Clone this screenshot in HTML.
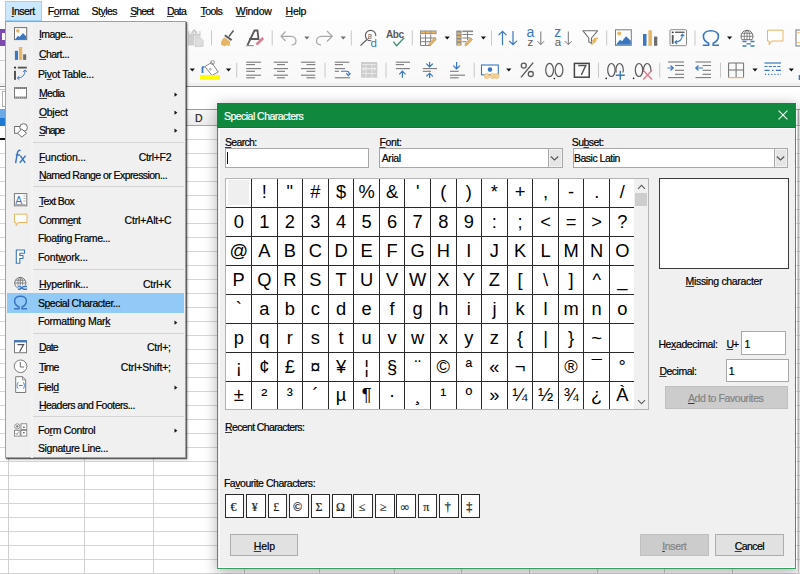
<!DOCTYPE html><html><head><meta charset="utf-8"><style>
html,body{margin:0;padding:0;}
body{width:800px;height:574px;overflow:hidden;position:relative;background:#fff;font-family:"Liberation Sans",sans-serif;}
.t{position:absolute;white-space:pre;line-height:1;-webkit-text-stroke:0.2px currentColor;}
.r{position:absolute;box-sizing:border-box;}
u{text-decoration:underline;text-underline-offset:1px;text-decoration-thickness:1px;text-decoration-color:#3a3a3a;}
</style></head><body>
<div class="r" style="left:0.00px;top:21.00px;width:800.00px;height:62.00px;background:linear-gradient(#fdfdfd,#f8f8f8)"></div>
<div class="r" style="left:0.00px;top:82.50px;width:800.00px;height:3.50px;background:#f0f0f0"></div>
<div class="r" style="left:0.00px;top:86.00px;width:800.00px;height:1.00px;background:#8c8c8c"></div>
<div class="r" style="left:0.00px;top:87.00px;width:800.00px;height:22.50px;background:#fff"></div>
<div class="r" style="left:0.00px;top:109.00px;width:800.00px;height:17.00px;background:linear-gradient(#f6f6f6,#ececec);border-top:1px solid #9a9a9a;border-bottom:1px solid #a8a8a8"></div>
<div class="r" style="left:0.00px;top:139.30px;width:800.00px;height:1.00px;background:#d6d6d6"></div>
<div class="r" style="left:0.00px;top:153.30px;width:800.00px;height:1.00px;background:#d6d6d6"></div>
<div class="r" style="left:0.00px;top:167.30px;width:800.00px;height:1.00px;background:#d6d6d6"></div>
<div class="r" style="left:0.00px;top:181.30px;width:800.00px;height:1.00px;background:#d6d6d6"></div>
<div class="r" style="left:0.00px;top:195.30px;width:800.00px;height:1.00px;background:#d6d6d6"></div>
<div class="r" style="left:0.00px;top:209.30px;width:800.00px;height:1.00px;background:#d6d6d6"></div>
<div class="r" style="left:0.00px;top:223.30px;width:800.00px;height:1.00px;background:#d6d6d6"></div>
<div class="r" style="left:0.00px;top:237.30px;width:800.00px;height:1.00px;background:#d6d6d6"></div>
<div class="r" style="left:0.00px;top:251.30px;width:800.00px;height:1.00px;background:#d6d6d6"></div>
<div class="r" style="left:0.00px;top:265.30px;width:800.00px;height:1.00px;background:#d6d6d6"></div>
<div class="r" style="left:0.00px;top:279.30px;width:800.00px;height:1.00px;background:#d6d6d6"></div>
<div class="r" style="left:0.00px;top:293.30px;width:800.00px;height:1.00px;background:#d6d6d6"></div>
<div class="r" style="left:0.00px;top:307.30px;width:800.00px;height:1.00px;background:#d6d6d6"></div>
<div class="r" style="left:0.00px;top:321.30px;width:800.00px;height:1.00px;background:#d6d6d6"></div>
<div class="r" style="left:0.00px;top:335.30px;width:800.00px;height:1.00px;background:#d6d6d6"></div>
<div class="r" style="left:0.00px;top:349.30px;width:800.00px;height:1.00px;background:#d6d6d6"></div>
<div class="r" style="left:0.00px;top:363.30px;width:800.00px;height:1.00px;background:#d6d6d6"></div>
<div class="r" style="left:0.00px;top:377.30px;width:800.00px;height:1.00px;background:#d6d6d6"></div>
<div class="r" style="left:0.00px;top:391.30px;width:800.00px;height:1.00px;background:#d6d6d6"></div>
<div class="r" style="left:0.00px;top:405.30px;width:800.00px;height:1.00px;background:#d6d6d6"></div>
<div class="r" style="left:0.00px;top:419.30px;width:800.00px;height:1.00px;background:#d6d6d6"></div>
<div class="r" style="left:0.00px;top:433.30px;width:800.00px;height:1.00px;background:#d6d6d6"></div>
<div class="r" style="left:0.00px;top:447.30px;width:800.00px;height:1.00px;background:#d6d6d6"></div>
<div class="r" style="left:0.00px;top:461.30px;width:800.00px;height:1.00px;background:#d6d6d6"></div>
<div class="r" style="left:0.00px;top:475.30px;width:800.00px;height:1.00px;background:#d6d6d6"></div>
<div class="r" style="left:0.00px;top:489.30px;width:800.00px;height:1.00px;background:#d6d6d6"></div>
<div class="r" style="left:0.00px;top:503.30px;width:800.00px;height:1.00px;background:#d6d6d6"></div>
<div class="r" style="left:0.00px;top:517.30px;width:800.00px;height:1.00px;background:#d6d6d6"></div>
<div class="r" style="left:0.00px;top:531.30px;width:800.00px;height:1.00px;background:#d6d6d6"></div>
<div class="r" style="left:0.00px;top:545.30px;width:800.00px;height:1.00px;background:#d6d6d6"></div>
<div class="r" style="left:0.00px;top:559.30px;width:800.00px;height:1.00px;background:#d6d6d6"></div>
<div class="r" style="left:0.00px;top:573.30px;width:800.00px;height:1.00px;background:#d6d6d6"></div>
<div class="r" style="left:8.20px;top:125.50px;width:1.00px;height:450.00px;background:#d0d0d0"></div>
<div class="r" style="left:8.20px;top:110.00px;width:1.00px;height:15.50px;background:#b8b8b8"></div>
<div class="r" style="left:84.20px;top:125.50px;width:1.00px;height:450.00px;background:#d0d0d0"></div>
<div class="r" style="left:84.20px;top:110.00px;width:1.00px;height:15.50px;background:#b8b8b8"></div>
<div class="r" style="left:152.60px;top:125.50px;width:1.00px;height:450.00px;background:#d0d0d0"></div>
<div class="r" style="left:152.60px;top:110.00px;width:1.00px;height:15.50px;background:#b8b8b8"></div>
<div class="r" style="left:244.20px;top:125.50px;width:1.00px;height:450.00px;background:#d0d0d0"></div>
<div class="r" style="left:244.20px;top:110.00px;width:1.00px;height:15.50px;background:#b8b8b8"></div>
<div class="r" style="left:319.10px;top:125.50px;width:1.00px;height:450.00px;background:#d0d0d0"></div>
<div class="r" style="left:319.10px;top:110.00px;width:1.00px;height:15.50px;background:#b8b8b8"></div>
<div class="r" style="left:394.00px;top:125.50px;width:1.00px;height:450.00px;background:#d0d0d0"></div>
<div class="r" style="left:394.00px;top:110.00px;width:1.00px;height:15.50px;background:#b8b8b8"></div>
<div class="r" style="left:461.40px;top:125.50px;width:1.00px;height:450.00px;background:#d0d0d0"></div>
<div class="r" style="left:461.40px;top:110.00px;width:1.00px;height:15.50px;background:#b8b8b8"></div>
<div class="r" style="left:529.20px;top:125.50px;width:1.00px;height:450.00px;background:#d0d0d0"></div>
<div class="r" style="left:529.20px;top:110.00px;width:1.00px;height:15.50px;background:#b8b8b8"></div>
<div class="r" style="left:596.60px;top:125.50px;width:1.00px;height:450.00px;background:#d0d0d0"></div>
<div class="r" style="left:596.60px;top:110.00px;width:1.00px;height:15.50px;background:#b8b8b8"></div>
<div class="r" style="left:664.00px;top:125.50px;width:1.00px;height:450.00px;background:#d0d0d0"></div>
<div class="r" style="left:664.00px;top:110.00px;width:1.00px;height:15.50px;background:#b8b8b8"></div>
<div class="r" style="left:731.50px;top:125.50px;width:1.00px;height:450.00px;background:#d0d0d0"></div>
<div class="r" style="left:731.50px;top:110.00px;width:1.00px;height:15.50px;background:#b8b8b8"></div>
<div class="r" style="left:797.50px;top:125.50px;width:1.00px;height:450.00px;background:#d0d0d0"></div>
<div class="r" style="left:797.50px;top:110.00px;width:1.00px;height:15.50px;background:#b8b8b8"></div>
<div class="t" style="left:195.00px;top:112.61px;font-size:10.5px;color:#222;letter-spacing:1.000px;">D</div>
<div class="r" style="left:0.00px;top:109.50px;width:5.00px;height:8.00px;background:#6aa9e6"></div>
<div class="r" style="left:0.00px;top:117.50px;width:5.00px;height:8.50px;background:#1f78d1"></div>
<div class="r" style="left:0.00px;top:138.30px;width:5.00px;height:1.60px;background:#111"></div>
<div class="r" style="left:0.00px;top:29.00px;width:5.00px;height:17.00px;background:#7d4bb0"></div>
<div class="r" style="left:1.50px;top:33.00px;width:3.50px;height:6.50px;background:#fff"></div>
<div class="r" style="left:0.00px;top:60.30px;width:5.00px;height:1.00px;background:#cfcfcf"></div>
<div class="r" style="left:0.00px;top:88.50px;width:5.00px;height:1.00px;background:#c8c8c8"></div>
<div class="r" style="left:1.80px;top:90.50px;width:3.20px;height:16.00px;border:1px solid #b0b0b0;border-right:none;background:#fff"></div>
<div class="r" style="left:5.00px;top:1.00px;width:37.00px;height:20.00px;background:#cce8ff;border:1px solid #99d1ff"></div>
<div class="t" style="left:11.50px;top:5.61px;font-size:10.5px;color:#000;letter-spacing:-0.500px;"><u>I</u>nsert</div>
<div class="t" style="left:47.75px;top:5.61px;font-size:10.5px;color:#000;letter-spacing:-0.370px;">F<u>o</u>rmat</div>
<div class="t" style="left:91.50px;top:5.61px;font-size:10.5px;color:#000;letter-spacing:-0.500px;">St<u>y</u>les</div>
<div class="t" style="left:130.20px;top:5.61px;font-size:10.5px;color:#000;letter-spacing:-0.850px;"><u>S</u>heet</div>
<div class="t" style="left:167.00px;top:5.61px;font-size:10.5px;color:#000;letter-spacing:-0.800px;"><u>D</u>ata</div>
<div class="t" style="left:200.60px;top:5.61px;font-size:10.5px;color:#000;letter-spacing:-0.600px;"><u>T</u>ools</div>
<div class="t" style="left:235.70px;top:5.61px;font-size:10.5px;color:#000;letter-spacing:-0.220px;"><u>W</u>indow</div>
<div class="t" style="left:285.60px;top:5.61px;font-size:10.5px;color:#000;letter-spacing:-0.300px;"><u>H</u>elp</div>
<svg class="r" style="left:0;top:0" width="800" height="90" viewBox="0 0 800 90"><rect x="188" y="31.3" width="12.6" height="14.2" fill="#cfcfcf"/><rect x="189.3" y="31.2" width="10" height="2.6" fill="#fbfbfb"/><path d="M190.6 33.4 L193.4 29.6 h1.6 L197.8 33.4 Z" fill="#c6c6c6"/><circle cx="194.2" cy="32.2" r="0.8" fill="#fbfbfb"/><path d="M194.2 36.4 h6.2 l3.8 3.8 v7.2 h-10 Z" fill="#fbfbfb"/><path d="M195.2 37.4 h4.8 l3 3 v6 h-7.8 Z" fill="#dedede" stroke="#c6c6c6" stroke-width="0.8"/><rect x="211.0" y="30.5" width="1" height="15.0" fill="#c8c8c8"/><path d="M233.5 30.5 L229 36.5" stroke="#5a5a5a" stroke-width="1.4"/><path d="M224.8 35.3 L231.6 40.1" stroke="#5a5a5a" stroke-width="2"/><path d="M224.3 37.2 L230.2 41.4 L229.6 46 L226.5 45.2 L224.2 46.2 L221 44.6 C220.5 42 222 39 224.3 37.2 Z" fill="#e8b564"/><path d="M247.5 45 L254.5 30.5 L257.5 30.5 L258.5 39 L249 39" stroke="#5a5a5a" stroke-width="1.8" fill="none"/><path d="M246.2 45.7 h7.5" stroke="#5a5a5a" stroke-width="0.8"/><path d="M256.4 44.6 L263.2 38" stroke="#e27a8f" stroke-width="2.6"/><rect x="271.7" y="30.5" width="1" height="15.0" fill="#c8c8c8"/><path d="M285.5 31.5 L281 36.3 L285.5 41" stroke="#a8a8a8" stroke-width="1.2" fill="none"/><path d="M281 36.3 H291 C294 36.3 296 38.5 296 41 C296 43.5 294 45 291.5 45" stroke="#a8a8a8" stroke-width="1.2" fill="none"/><path d="M304.25 36.4 L309.45000000000005 36.4 L306.85 39.4 Z" fill="#6e6e6e"/><path d="M327 31 L332.3 36.3 L327 41.5" stroke="#a8a8a8" stroke-width="1.2" fill="none"/><path d="M332.3 36.3 H321.5 C318.5 36.3 316.5 38.5 316.5 41 C316.5 43.5 318.5 44.8 321 44.8" stroke="#a8a8a8" stroke-width="1.2" fill="none"/><path d="M340.65 36.4 L345.85 36.4 L343.25 39.4 Z" fill="#6e6e6e"/><rect x="350.8" y="30.5" width="1" height="15.0" fill="#c8c8c8"/><circle cx="370.6" cy="35.6" r="5.2" stroke="#5a5a5a" stroke-width="1.1" fill="none"/><path d="M366.8 39.6 L360.5 45.6" stroke="#5a5a5a" stroke-width="1.3"/><text x="367.4" y="39" font-family="Liberation Sans" font-size="8.5" fill="#5a5a5a">a</text><rect x="371.5" y="36" width="7" height="10" fill="#fff"/><text x="370.6" y="46.8" font-family="Liberation Sans" font-size="11.5" fill="#3a77c0">d</text><text x="386" y="37.8" font-family="Liberation Sans" font-weight="bold" font-size="10" fill="#5a5a5a" letter-spacing="-0.4">Abc</text><path d="M393.4 41.6 L396.6 45.8 L404.2 37.8" stroke="#3b8f6e" stroke-width="1.3" fill="none"/><rect x="411.8" y="30.5" width="1" height="15.0" fill="#c8c8c8"/><rect x="420" y="30.5" width="16.5" height="3.6" fill="#8a8a8a"/><rect x="420.8" y="31.3" width="4.4" height="2" fill="#e8b564"/><rect x="426" y="31.3" width="4.4" height="2" fill="#e8b564"/><rect x="431.2" y="31.3" width="4.4" height="2" fill="#e8b564"/><path d="M420.5 34.5 V45.5 H431 M420.5 38 H436 M420.5 41.7 H431 M425.5 34.5 V45.5 M430.7 34.5 V41" stroke="#777" stroke-width="0.9" fill="none"/><path d="M429 45.8 L428.6 44 L434.5 37.8 L436.3 39.6 L430.4 45.6 Z" fill="#e8b564" stroke="#9a8460" stroke-width="0.5"/><path d="M444.59999999999997 36.4 L449.8 36.4 L447.2 39.4 Z" fill="#111"/><rect x="456.3" y="30.5" width="5.2" height="15" fill="#8a8a8a"/><rect x="457.2" y="32.5" width="3.4" height="2" fill="#e8b564"/><rect x="457.2" y="36" width="3.4" height="2" fill="#e8b564"/><rect x="457.2" y="39.5" width="3.4" height="2" fill="#e8b564"/><rect x="457.2" y="43" width="3.4" height="2" fill="#e8b564"/><rect x="462.3" y="30.5" width="10.8" height="1.6" fill="#8a8a8a"/><path d="M462.3 34.5 H473.1 M462.3 38 H470.3 M462.3 41.7 H466.3 M467.5 32 V40" stroke="#777" stroke-width="0.9" fill="none"/><path d="M465.3 45.8 L464.90000000000003 44 L470.8 37.8 L472.6 39.6 L466.7 45.6 Z" fill="#e8b564" stroke="#9a8460" stroke-width="0.5"/><path d="M480.79999999999995 36.4 L486.0 36.4 L483.4 39.4 Z" fill="#111"/><rect x="491.0" y="30.5" width="1" height="15.0" fill="#c8c8c8"/><path d="M502.5 45 V31.5 M498.6 35.2 L502.5 31.3 L506.4 35.2" stroke="#3a77c0" stroke-width="1.2" fill="none"/><path d="M513 31 V44.5 M509.1 40.8 L513 44.7 L516.9 40.8" stroke="#3a77c0" stroke-width="1.2" fill="none"/><text x="526.4" y="37.4" font-family="Liberation Sans" font-size="14" fill="#3a77c0" transform="translate(526.4 37.4) scale(1 1.05) translate(-526.4 -37.4)">a</text><text x="527.6" y="45.8" font-family="Liberation Sans" font-size="11.5" fill="#5a5a5a">z</text><path d="M540.8 31.5 V44.5 M537.5 41.2 L540.8 44.6 L544.1 41.2" stroke="#777" stroke-width="1" fill="none"/><text x="554.2" y="37.4" font-family="Liberation Sans" font-size="14" fill="#3a77c0">z</text><text x="554.8" y="45.8" font-family="Liberation Sans" font-size="11.5" fill="#5a5a5a">a</text><path d="M568.3 31.5 V44.5 M565 41.2 L568.3 44.6 L571.6 41.2" stroke="#777" stroke-width="1" fill="none"/><path d="M583 30.8 H597.5 L591.5 38 V43.2 L588.8 42 V38 Z" stroke="#707070" stroke-width="1.1" fill="#fff" stroke-linejoin="round"/><path d="M594.5 37.8 L598.6 37.8 L595.5 40.6 L597.2 40.6 L590.6 46.3 L593 41.8 L591.2 41.8 Z" fill="#e8b564"/><rect x="606.2" y="30.5" width="1" height="15.0" fill="#c8c8c8"/><rect x="615.5" y="29.8" width="15.8" height="15.5" fill="#fff" stroke="#7a7a7a" stroke-width="1"/><circle cx="619.2" cy="33.5" r="2.0" fill="#e8b564"/><path d="M616 44.8 L620.0 39.8 L622.0 41.3 L626.0 36.3 L630.8 40.8 V44.8 Z" fill="#3a77c0"/><rect x="643" y="34" width="3.5" height="11.8" fill="#3a77c0"/><rect x="648.4" y="30.3" width="3.5" height="15.5" fill="#e8b564"/><rect x="654" y="36.6" width="3.3" height="9.2" fill="#6e6e6e"/><rect x="670" y="29.7" width="16.5" height="16" rx="1" fill="#fff" stroke="#8a8a8a" stroke-width="1"/><rect x="671.8" y="31.6" width="1.8" height="1.6" fill="#333"/><rect x="675" y="31.6" width="9.5" height="1.3" fill="#555"/><rect x="671.8" y="35" width="1.8" height="8.8" fill="#555"/><path d="M675.5 42.2 C679 42.2 682.5 39.5 682.5 34.8 M680.7 36.2 L682.5 34.2 L684.3 36.2 M677 40.4 L675 42.2 L677 44" stroke="#3a77c0" stroke-width="1.1" fill="none"/><rect x="694.5" y="30.5" width="1" height="15.0" fill="#c8c8c8"/><path d="M702.8 45.2 H708.6 V43.3 C705.2 41.6 703.4 38.9 703.4 36.2 C703.4 32.9 706.6 30.7 710.9 30.7 C715.2 30.7 718.4 32.9 718.4 36.2 C718.4 38.9 716.6 41.6 713.2 43.3 V45.2 H719" stroke="#3a77c0" stroke-width="1.6" fill="none"/><path d="M727.0 36.4 L732.2 36.4 L729.6 39.4 Z" fill="#111"/><circle cx="747" cy="36.3" r="6" stroke="#6e6e6e" stroke-width="1" fill="none"/><path d="M741 36.3 H753 M742 33.3 H752 M742 39.5 H752 M747 30.3 V42.3" stroke="#6e6e6e" stroke-width="0.8" fill="none"/><ellipse cx="747" cy="36.3" rx="2.8" ry="6" stroke="#6e6e6e" stroke-width="0.8" fill="none"/><rect x="741.5" y="40.5" width="15" height="6.5" fill="#fff"/><path d="M742.5 41.5 h4 M750.5 41.5 h4 M746.5 43.8 h4.5 M742.5 46 h4 M750.5 46 h4" stroke="#3a77c0" stroke-width="1.3"/><path d="M767.5 30.2 H783 V41 H771.8 L769.2 44.8 V41 H767.5 Z" fill="#fff" stroke="#e8b564" stroke-width="1" stroke-linejoin="round"/><rect x="796" y="30" width="6" height="16" fill="#fff" stroke="#777" stroke-width="1"/><rect x="797.5" y="32" width="2" height="1.2" fill="#e8b564"/><rect x="797.5" y="42" width="2" height="1.2" fill="#e8b564"/><path d="M189.70000000000002 68.4 L194.9 68.4 L192.3 71.4 Z" fill="#111"/><path d="M202.5 67 V73" stroke="#3a77c0" stroke-width="1.8"/><path d="M202 67 h2.5" stroke="#3a77c0" stroke-width="1.5"/><path d="M205 66.5 L211.6 62.5 L218.2 72 L212 75.5 Z" fill="#fff" stroke="#777" stroke-width="0.9" stroke-linejoin="round"/><circle cx="212.5" cy="62.5" r="1.9" stroke="#777" stroke-width="0.8" fill="none"/><circle cx="210.4" cy="69.2" r="0.9" stroke="#777" stroke-width="0.6" fill="none"/><rect x="200" y="75" width="20" height="4.8" fill="#ffff00"/><path d="M225.9 68.4 L231.1 68.4 L228.5 71.4 Z" fill="#111"/><rect x="236.2" y="62.7" width="1" height="15.0" fill="#c8c8c8"/><path d="M246.2 62.2 H261" stroke="#7a7a7a" stroke-width="1.1"/><path d="M246.2 64.6 H255" stroke="#7a7a7a" stroke-width="1.1"/><path d="M246.2 68.6 H261" stroke="#7a7a7a" stroke-width="1.1"/><path d="M246.2 71.3 H255" stroke="#7a7a7a" stroke-width="1.1"/><path d="M246.2 75.2 H261" stroke="#7a7a7a" stroke-width="1.1"/><path d="M246.2 77.8 H255" stroke="#7a7a7a" stroke-width="1.1"/><path d="M273.7 62.2 H288" stroke="#7a7a7a" stroke-width="1.1"/><path d="M277 64.6 H285" stroke="#7a7a7a" stroke-width="1.1"/><path d="M273.7 68.6 H288" stroke="#7a7a7a" stroke-width="1.1"/><path d="M277 71.3 H285" stroke="#7a7a7a" stroke-width="1.1"/><path d="M273.7 75.2 H288" stroke="#7a7a7a" stroke-width="1.1"/><path d="M277 77.8 H285" stroke="#7a7a7a" stroke-width="1.1"/><path d="M301 62.2 H315.3" stroke="#7a7a7a" stroke-width="1.1"/><path d="M306.5 64.6 H315.3" stroke="#7a7a7a" stroke-width="1.1"/><path d="M301 68.6 H315.3" stroke="#7a7a7a" stroke-width="1.1"/><path d="M306.5 71.3 H315.3" stroke="#7a7a7a" stroke-width="1.1"/><path d="M301 75.2 H315.3" stroke="#7a7a7a" stroke-width="1.1"/><path d="M306.5 77.8 H315.3" stroke="#7a7a7a" stroke-width="1.1"/><rect x="324.5" y="62.7" width="1" height="15.0" fill="#c8c8c8"/><path d="M334.8 62.2 H349.3" stroke="#7a7a7a" stroke-width="1.1"/><path d="M334.8 64.6 H343" stroke="#7a7a7a" stroke-width="1.1"/><path d="M334.8 68.6 H345" stroke="#7a7a7a" stroke-width="1.1"/><path d="M334.8 71.3 H339" stroke="#7a7a7a" stroke-width="1.1"/><path d="M334.8 77.8 H350" stroke="#7a7a7a" stroke-width="1.1"/><path d="M341 71.3 H346.5 C348.5 71.3 349.5 72.5 349 74.6 M346.3 73.2 L348.3 75.6 L350.6 73.4" stroke="#3a77c0" stroke-width="1.1" fill="none"/><rect x="361" y="62" width="16.3" height="15.7" fill="#cdcdcd"/><path d="M362 64.5 H376.3 M362 73.5 H376.3 M366 65 V77 M372 65 V77" stroke="#e8e8e8" stroke-width="1"/><path d="M362.5 68.8 H375.8 M364.5 67.2 L362.5 68.8 L364.5 70.4 M373.8 67.2 L375.8 68.8 L373.8 70.4" stroke="#f4f4f4" stroke-width="1" fill="none"/><rect x="385.5" y="62.7" width="1" height="15.0" fill="#c8c8c8"/><path d="M395.8 62.2 H410" stroke="#7a7a7a" stroke-width="1.1"/><path d="M395.8 64.6 H404" stroke="#7a7a7a" stroke-width="1.1"/><path d="M395.8 68.6 H410" stroke="#7a7a7a" stroke-width="1.1"/><path d="M402.4 77.8 V71.5 M399.3 74.4 L402.4 71.2 L405.5 74.4" stroke="#3a77c0" stroke-width="1.2" fill="none"/><path d="M422.8 68.6 H437" stroke="#7a7a7a" stroke-width="1.1"/><path d="M422.8 71.3 H431" stroke="#7a7a7a" stroke-width="1.1"/><path d="M429.6 62 V66.5 M426.3 63.6 L429.6 66.8 L432.9 63.6 M429.6 78 V73.6 M426.3 76.4 L429.6 73.3 L432.9 76.4" stroke="#3a77c0" stroke-width="1.2" fill="none"/><path d="M450 71.3 H458.7" stroke="#7a7a7a" stroke-width="1.1"/><path d="M450 75.2 H465" stroke="#7a7a7a" stroke-width="1.1"/><path d="M450 77.8 H458.7" stroke="#7a7a7a" stroke-width="1.1"/><path d="M456.6 62 V68.5 M453.3 65.6 L456.6 68.8 L459.9 65.6" stroke="#3a77c0" stroke-width="1.2" fill="none"/><rect x="473.7" y="62.7" width="1" height="15.0" fill="#c8c8c8"/><rect x="481.5" y="65" width="16.8" height="9.8" fill="#fff" stroke="#3a77c0" stroke-width="1.1"/><circle cx="490" cy="69.6" r="2.3" fill="#3a77c0"/><ellipse cx="486.8" cy="76" rx="2.5" ry="2.6" fill="#f2d49a" stroke="#e8b564" stroke-width="0.6"/><ellipse cx="492.7" cy="76" rx="2.5" ry="2.6" fill="#f2d49a" stroke="#e8b564" stroke-width="0.6"/><ellipse cx="496.6" cy="76" rx="2.5" ry="2.6" fill="#f2d49a" stroke="#e8b564" stroke-width="0.6"/><path d="M506.2 68.4 L511.40000000000003 68.4 L508.8 71.4 Z" fill="#111"/><circle cx="523.8" cy="65.6" r="2.5" stroke="#5a5a5a" stroke-width="1.3" fill="none"/><circle cx="530.8" cy="74" r="2.5" stroke="#5a5a5a" stroke-width="1.3" fill="none"/><path d="M533.2 62.6 L521 77.4" stroke="#5a5a5a" stroke-width="1.4"/><ellipse cx="549.6" cy="70" rx="3.9" ry="6.6" stroke="#5a5a5a" stroke-width="1.2" fill="none"/><ellipse cx="559" cy="70" rx="3.9" ry="6.6" stroke="#5a5a5a" stroke-width="1.2" fill="none"/><circle cx="554.4" cy="78.6" r="0.8" fill="#111"/><rect x="574.4" y="63.4" width="14.8" height="13.8" fill="#fff" stroke="#444" stroke-width="1.5"/><path d="M578.2 65.6 H585.8 L581.3 75" stroke="#555" stroke-width="1.5" fill="none"/><rect x="598.0" y="62.7" width="1" height="15.0" fill="#c8c8c8"/><circle cx="606.2" cy="78.4" r="0.8" fill="#111"/><ellipse cx="611.4" cy="70" rx="3.7" ry="6.5" stroke="#5a5a5a" stroke-width="1.2" fill="none"/><ellipse cx="619.6" cy="70" rx="3.7" ry="6.5" stroke="#5a5a5a" stroke-width="1.2" fill="none"/><rect x="615.5" y="72.5" width="9.5" height="4.5" fill="#fbfbfb"/><path d="M620.3 70.8 V79.8 M615.8 75.3 H624.8" stroke="#3a77c0" stroke-width="1.4"/><circle cx="633.6" cy="78.4" r="0.8" fill="#111"/><ellipse cx="639" cy="70" rx="3.7" ry="6.5" stroke="#5a5a5a" stroke-width="1.2" fill="none"/><ellipse cx="647.2" cy="70" rx="3.7" ry="6.5" stroke="#5a5a5a" stroke-width="1.2" fill="none"/><rect x="643" y="72" width="9.5" height="5" fill="#fbfbfb"/><path d="M643.2 70.2 L652 79.5 M652 70.2 L643.2 79.5" stroke="#e27a8f" stroke-width="1.4"/><rect x="659.2" y="62.7" width="1" height="15.0" fill="#c8c8c8"/><path d="M668 62 H684" stroke="#7a7a7a" stroke-width="1.1"/><path d="M675 65.5 H684" stroke="#7a7a7a" stroke-width="1.1"/><path d="M675 70.3 H684" stroke="#7a7a7a" stroke-width="1.1"/><path d="M675 74.3 H684" stroke="#7a7a7a" stroke-width="1.1"/><path d="M668 77.6 H684" stroke="#7a7a7a" stroke-width="1.1"/><path d="M667.5 68 H673 M670.5 65.5 L673.2 68 L670.5 70.5" stroke="#3a77c0" stroke-width="1.2" fill="none"/><path d="M695.5 62 H711" stroke="#7a7a7a" stroke-width="1.1"/><path d="M702.5 65.5 H711" stroke="#7a7a7a" stroke-width="1.1"/><path d="M702.5 70.3 H711" stroke="#7a7a7a" stroke-width="1.1"/><path d="M702.5 74.3 H711" stroke="#7a7a7a" stroke-width="1.1"/><path d="M695.5 77.6 H711" stroke="#7a7a7a" stroke-width="1.1"/><path d="M696 68 H703 M698.5 65.5 L695.8 68 L698.5 70.5" stroke="#3a77c0" stroke-width="1.2" fill="none"/><rect x="720.0" y="62.7" width="1" height="15.0" fill="#c8c8c8"/><path d="M728.6 77 V63 H743.6 V77 M728.6 70 H743.6 M736.1 63 V77" stroke="#6e6e6e" stroke-width="1" fill="none"/><path d="M728 77.6 H744" stroke="#e8b564" stroke-width="1.2"/><path d="M752.4 68.4 L757.6 68.4 L755 71.4 Z" fill="#111"/><path d="M764.5 63 H781" stroke="#3a77c0" stroke-width="1.2"/><path d="M764.5 66.5 H781" stroke="#3a77c0" stroke-width="1.2" stroke-dasharray="3 1.3"/><path d="M764.5 70.3 H769.5 M772 70.3 H773.5 M775.8 70.3 H781" stroke="#3a77c0" stroke-width="1.2"/><path d="M765 74.3 H781" stroke="#3a77c0" stroke-width="1.2" stroke-dasharray="1.2 1.9"/><path d="M788.6999999999999 68.4 L793.9 68.4 L791.3 71.4 Z" fill="#111"/><rect x="798.7" y="75" width="2" height="5" fill="#3a77c0"/></svg>
<div class="r" style="left:217.5px;top:103px;width:579px;height:466px;box-shadow:0 3px 13px 1px rgba(0,0,0,0.3);"></div>
<div class="r" style="left:5px;top:21px;width:180.6px;height:437.2px;background:#f0f0f0;border:1px solid #a0a0a0;box-shadow:1px 1px 1px rgba(0,0,0,0.55), 2px 2px 2px rgba(0,0,0,0.2);"></div>
<div class="r" style="left:30.50px;top:22.50px;width:2.50px;height:435.00px;background:#f3f3f3"></div>
<div class="r" style="left:7.00px;top:293.00px;width:177.00px;height:20.00px;background:#91c9f7"></div>
<div class="t" style="left:38.90px;top:29.11px;font-size:10.5px;color:#000;letter-spacing:-0.514px;"><u>I</u>mage...</div>
<div class="t" style="left:38.90px;top:48.81px;font-size:10.5px;color:#000;letter-spacing:-0.529px;"><u>C</u>hart...</div>
<div class="t" style="left:37.90px;top:68.61px;font-size:10.5px;color:#000;letter-spacing:-0.285px;">Pi<u>v</u>ot Table...</div>
<div class="t" style="left:38.90px;top:88.21px;font-size:10.5px;color:#000;letter-spacing:-0.650px;"><u>M</u>edia</div>
<svg class="r" style="left:173.8px;top:91.7px" width="5" height="6"><path d="M0.5 0.6 L3.4 2.7 L0.5 4.8 Z" fill="#111"/></svg>
<div class="t" style="left:38.90px;top:106.51px;font-size:10.5px;color:#000;letter-spacing:-0.280px;"><u>O</u>bject</div>
<svg class="r" style="left:173.8px;top:110.0px" width="5" height="6"><path d="M0.5 0.6 L3.4 2.7 L0.5 4.8 Z" fill="#111"/></svg>
<div class="t" style="left:38.90px;top:124.91px;font-size:10.5px;color:#000;letter-spacing:-1.025px;"><u>S</u>hape</div>
<svg class="r" style="left:173.8px;top:128.4px" width="5" height="6"><path d="M0.5 0.6 L3.4 2.7 L0.5 4.8 Z" fill="#111"/></svg>
<div class="t" style="left:38.90px;top:151.61px;font-size:10.5px;color:#000;letter-spacing:-0.200px;"><u>F</u>unction...</div>
<div class="t" style="left:138.75px;top:151.61px;font-size:10.5px;color:#000;letter-spacing:-0.333px;">Ctrl+F2</div>
<div class="t" style="left:38.90px;top:169.51px;font-size:10.5px;color:#000;letter-spacing:-0.552px;"><u>N</u>amed Range or Expression...</div>
<div class="t" style="left:38.90px;top:195.71px;font-size:10.5px;color:#000;letter-spacing:-0.643px;"><u>T</u>ext Box</div>
<div class="t" style="left:38.90px;top:215.11px;font-size:10.5px;color:#000;letter-spacing:-0.567px;">Comm<u>e</u>nt</div>
<div class="t" style="left:124.50px;top:215.11px;font-size:10.5px;color:#000;letter-spacing:-0.139px;">Ctrl+Alt+C</div>
<div class="t" style="left:37.90px;top:233.21px;font-size:10.5px;color:#000;letter-spacing:-0.425px;">Floa<u>t</u>ing Frame...</div>
<div class="t" style="left:37.90px;top:251.91px;font-size:10.5px;color:#000;letter-spacing:-0.180px;">Font<u>w</u>ork...</div>
<div class="t" style="left:38.90px;top:278.91px;font-size:10.5px;color:#000;letter-spacing:-0.282px;"><u>H</u>yperlink...</div>
<div class="t" style="left:143.00px;top:278.91px;font-size:10.5px;color:#000;letter-spacing:-0.250px;">Ctrl+K</div>
<div class="t" style="left:37.90px;top:298.21px;font-size:10.5px;color:#000;letter-spacing:-0.468px;">S<u>p</u>ecial Character...</div>
<div class="t" style="left:37.90px;top:316.01px;font-size:10.5px;color:#000;letter-spacing:-0.279px;">Formatting Mar<u>k</u></div>
<svg class="r" style="left:173.8px;top:319.5px" width="5" height="6"><path d="M0.5 0.6 L3.4 2.7 L0.5 4.8 Z" fill="#111"/></svg>
<div class="t" style="left:38.90px;top:341.81px;font-size:10.5px;color:#000;letter-spacing:-0.833px;"><u>D</u>ate</div>
<div class="t" style="left:147.00px;top:341.81px;font-size:10.5px;color:#000;letter-spacing:-0.300px;">Ctrl+;</div>
<div class="t" style="left:38.90px;top:361.81px;font-size:10.5px;color:#000;letter-spacing:-0.867px;"><u>T</u>ime</div>
<div class="t" style="left:120.75px;top:361.81px;font-size:10.5px;color:#000;letter-spacing:-0.205px;">Ctrl+Shift+;</div>
<div class="t" style="left:37.90px;top:381.71px;font-size:10.5px;color:#000;letter-spacing:-0.400px;">Fiel<u>d</u></div>
<svg class="r" style="left:173.8px;top:385.2px" width="5" height="6"><path d="M0.5 0.6 L3.4 2.7 L0.5 4.8 Z" fill="#111"/></svg>
<div class="t" style="left:38.90px;top:399.81px;font-size:10.5px;color:#000;letter-spacing:-0.519px;"><u>H</u>eaders and Footers...</div>
<div class="t" style="left:37.90px;top:424.51px;font-size:10.5px;color:#000;letter-spacing:-0.327px;">Fo<u>r</u>m Control</div>
<svg class="r" style="left:173.8px;top:428.0px" width="5" height="6"><path d="M0.5 0.6 L3.4 2.7 L0.5 4.8 Z" fill="#111"/></svg>
<div class="t" style="left:37.90px;top:443.01px;font-size:10.5px;color:#000;letter-spacing:-0.375px;">Signat<u>u</u>re Line...</div>
<div class="r" style="left:33.00px;top:142.20px;width:151.00px;height:1.00px;background:#d4d4d4"></div>
<div class="r" style="left:33.00px;top:186.10px;width:151.00px;height:1.00px;background:#d4d4d4"></div>
<div class="r" style="left:33.00px;top:268.80px;width:151.00px;height:1.00px;background:#d4d4d4"></div>
<div class="r" style="left:33.00px;top:332.60px;width:151.00px;height:1.00px;background:#d4d4d4"></div>
<div class="r" style="left:33.00px;top:415.70px;width:151.00px;height:1.00px;background:#d4d4d4"></div>
<svg class="r" style="left:0;top:0" width="40" height="460" viewBox="0 0 40 460"><rect x="14.5" y="27.6" width="12.2" height="12" fill="#fff" stroke="#707070" stroke-width="1"/><circle cx="17.8" cy="30.9" r="1.8" fill="#e8b564"/><path d="M15 39.6 L18 35.8 L19.5 37 L23 33 L26.2 36.5 V39.6 Z" fill="#3a77c0"/><rect x="14.9" y="50.8" width="3.1" height="9.1" fill="#3a77c0"/><rect x="18.9" y="47" width="3.3" height="12.9" fill="#e8b564"/><rect x="23.1" y="54.3" width="3.1" height="5.6" fill="#6e6e6e"/><rect x="14" y="66.7" width="2" height="1.8" fill="#333"/><rect x="17.8" y="66.7" width="9" height="1.8" fill="#555"/><rect x="14" y="70.8" width="2" height="9" fill="#555"/><path d="M17.6 78 C21.5 78 25 75.5 25 70.5 M23.2 72 L25 70 L26.8 72 M19.3 76.2 L17.3 78 L19.3 79.8" stroke="#3a77c0" stroke-width="1" fill="none"/><rect x="14" y="87" width="13" height="11.6" fill="#7a7a7a"/><rect x="15" y="89" width="11" height="7.6" fill="#fff"/><path d="M15 88 H26 M15 97.6 H26" stroke="#fff" stroke-width="0.5" stroke-dasharray="0.8 1.2"/><rect x="14.6" y="126.5" width="6.8" height="6.8" fill="#fff" stroke="#6e6e6e" stroke-width="1"/><circle cx="23.6" cy="127.5" r="3.8" fill="#fff" stroke="#6e6e6e" stroke-width="1"/><path d="M21.8 129 L26.5 133.2 L21.8 137 L17.5 133.2 Z" fill="#fff" stroke="#6e6e6e" stroke-width="1"/><path d="M20.6 150.6 C19.2 150 17.8 150.6 17.5 152.5 L15.6 163.2 M15.8 155 H20" stroke="#3a77c0" stroke-width="1.5" fill="none"/><path d="M20.3 155.6 L25.2 162.8 M25.6 155.6 L19.8 162.8" stroke="#3a77c0" stroke-width="1.5" fill="none"/><rect x="14.4" y="193.6" width="12.4" height="12.2" fill="#fff" stroke="#7a7a7a" stroke-width="1"/><text x="15.2" y="203.6" font-family="Liberation Sans" font-size="10.5" fill="#3a77c0">A</text><path d="M23.5 196 H25.5 M23.5 198.5 H25.5 M23.5 201 H25.5 M15.5 204.5 H25.5" stroke="#888" stroke-width="0.7"/><path d="M14.5 214.2 H27 V222.5 H18.3 L16.2 225.8 V222.5 H14.5 Z" fill="#fff" stroke="#e8b564" stroke-width="1" stroke-linejoin="round"/><path d="M16.3 250 H24.5 V253.2 H19.8 V255.5 H23 V258.5 H19.8 V263.3 H16.3 Z" fill="#fff" stroke="#3a77c0" stroke-width="1.1" stroke-linejoin="round"/><circle cx="20.3" cy="283" r="5.6" stroke="#6e6e6e" stroke-width="0.9" fill="none"/><ellipse cx="20.3" cy="283" rx="2.4" ry="5.6" stroke="#6e6e6e" stroke-width="0.7" fill="none"/><path d="M14.8 283 H25.8 M15.6 280.2 H25 M20.3 277.4 V288.6" stroke="#6e6e6e" stroke-width="0.8"/><rect x="18" y="285.3" width="9.5" height="4.7" fill="#f0f0f0"/><path d="M18 286.5 H19.5 C21.5 286.5 22 289.2 24 289.2 H27 M18 289.2 H19.5 C21.5 289.2 22 286.5 24 286.5 H27" stroke="#3a77c0" stroke-width="1.4" fill="none"/><path d="M14 308.8 H19 V307 C16.1 305.6 14.6 303.3 14.6 300.9 C14.6 298 17.2 296.2 20.5 296.2 C23.8 296.2 26.4 298 26.4 300.9 C26.4 303.3 24.9 305.6 22 307 V308.8 H27" stroke="#3a77c0" stroke-width="1.5" fill="none"/><rect x="14.5" y="340.7" width="12" height="12" fill="#fff" stroke="#7a7a7a" stroke-width="1"/><rect x="14" y="340.2" width="13" height="2.2" fill="#3a77c0"/><path d="M17.4 344.6 H23.6 L19.6 351.8" stroke="#555" stroke-width="1.2" fill="none"/><circle cx="20.6" cy="366.3" r="6.3" fill="#fff" stroke="#7a7a7a" stroke-width="1"/><path d="M20.3 362 V367 H24" stroke="#6a6a6a" stroke-width="1" fill="none"/><path d="M15.7 376.7 H22.5 L25.7 379.9 V392.5 H15.7 Z" fill="#fff" stroke="#7a7a7a" stroke-width="1" stroke-linejoin="round"/><path d="M22.5 376.7 V379.9 H25.7" stroke="#7a7a7a" stroke-width="0.8" fill="none"/><path d="M18.5 382.5 C17 382.5 17.5 385 16.8 385.5 C17.5 386 17 388.5 18.5 388.5 M23 382.5 C24.5 382.5 24 385 24.7 385.5 C24 386 24.5 388.5 23 388.5 M18.8 385.5 H22.7" stroke="#3a77c0" stroke-width="0.9" fill="none"/><circle cx="17.3" cy="426.4" r="2.6" fill="#fff" stroke="#777" stroke-width="0.8"/><circle cx="17.3" cy="426.4" r="1.2" fill="#777"/><rect x="21" y="423.8" width="5.8" height="5.8" fill="#fff" stroke="#777" stroke-width="0.8"/><rect x="14.5" y="430.3" width="5.6" height="5.8" fill="#fff" stroke="#777" stroke-width="0.8"/><rect x="21" y="430.3" width="5.8" height="5.8" fill="#fff" stroke="#777" stroke-width="0.8"/><path d="M22.8 428 L23.9 426 L25 428 Z M22.8 432 L23.9 434 L25 432 Z" fill="#666"/><path d="M15.5 433 L16.8 434.5 L19 431.5" stroke="#666" stroke-width="0.7" fill="none"/></svg>
<div class="r" style="left:217.20px;top:103.00px;width:579.00px;height:465.70px;background:#f0f0f0;border:1px solid #3a9d62"></div>
<div class="r" style="left:217.20px;top:103.00px;width:579.00px;height:25.30px;background:#10893e"></div>
<div class="r" style="left:218.20px;top:128.30px;width:577.00px;height:1.00px;background:#fff"></div>
<div class="r" style="left:218.50px;top:128.30px;width:1.00px;height:439.40px;background:#fafafa"></div>
<div class="r" style="left:218.20px;top:566.70px;width:577.00px;height:1.00px;background:#fcfcfc"></div>
<div class="r" style="left:217.20px;top:127.30px;width:579.00px;height:1.00px;background:#0b7d35"></div>
<div class="t" style="left:224.00px;top:111.11px;font-size:10.5px;color:#fff;letter-spacing:-0.529px;">Special Characters</div>
<svg class="r" style="left:777.7px;top:110.4px" width="10" height="10"><path d="M0.6 0.6 L9.4 9.4 M9.4 0.6 L0.6 9.4" stroke="#fff" stroke-width="1.1"/></svg>
<div class="t" style="left:225.00px;top:136.61px;font-size:10.5px;color:#000;letter-spacing:-0.667px;"><u>S</u>earch:</div>
<div class="t" style="left:379.50px;top:136.71px;font-size:10.5px;color:#000;letter-spacing:-0.375px;"><u>F</u>ont:</div>
<div class="t" style="left:571.80px;top:136.61px;font-size:10.5px;color:#000;letter-spacing:-0.550px;">Su<u>b</u>set:</div>
<div class="r" style="left:225.00px;top:148.00px;width:143.50px;height:19.70px;background:#fff;border:1px solid #a8a8a8"></div>
<div class="r" style="left:227.40px;top:152.30px;width:1.00px;height:12.00px;background:#111"></div>
<div class="r" style="left:379.20px;top:148.10px;width:183.40px;height:19.70px;background:#fff;border:1px solid #a8a8a8"></div>
<div class="r" style="left:548.00px;top:148.10px;width:14.60px;height:19.70px;background:#e5e5e5;border:1px solid #a8a8a8;box-shadow:inset 0 0 0 1px #f2f2f2"></div>
<svg class="r" style="left:550.1px;top:154.5px" width="9" height="7"><path d="M0.8 1.5 L4.5 5 L8.2 1.5" stroke="#555" stroke-width="1.1" fill="none"/></svg>
<div class="t" style="left:381.80px;top:153.11px;font-size:10.5px;color:#000;letter-spacing:-0.450px;">Arial</div>
<div class="r" style="left:572.60px;top:148.10px;width:215.60px;height:19.70px;background:#fff;border:1px solid #a8a8a8"></div>
<div class="r" style="left:773.60px;top:148.10px;width:14.60px;height:19.70px;background:#e5e5e5;border:1px solid #a8a8a8;box-shadow:inset 0 0 0 1px #f2f2f2"></div>
<svg class="r" style="left:775.7px;top:154.5px" width="9" height="7"><path d="M0.8 1.5 L4.5 5 L8.2 1.5" stroke="#555" stroke-width="1.1" fill="none"/></svg>
<div class="t" style="left:574.00px;top:153.11px;font-size:10.5px;color:#000;letter-spacing:-0.500px;">Basic Latin</div>
<div class="r" style="left:225.00px;top:177.80px;width:424.20px;height:231.80px;background:#fff;border:1px solid #b4b4b4"></div>
<div class="r" style="left:634.20px;top:178.80px;width:14.00px;height:229.80px;background:#f0f0f0"></div>
<svg class="r" style="left:637px;top:183.5px" width="9" height="6"><path d="M1 4.8 L4.5 1.3 L8 4.8" stroke="#606060" stroke-width="1.1" fill="none"/></svg>
<div class="r" style="left:635.20px;top:193.00px;width:12.00px;height:12.50px;background:#cdcdcd"></div>
<svg class="r" style="left:637px;top:399px" width="9" height="6"><path d="M1 1.2 L4.5 4.7 L8 1.2" stroke="#606060" stroke-width="1.1" fill="none"/></svg>
<div class="r" style="left:227.60px;top:180.30px;width:21.70px;height:24.50px;background:#efefef"></div>
<div class="r" style="left:251.00px;top:178.80px;width:1.00px;height:230.50px;background:#2a2a2a"></div>
<div class="r" style="left:277.00px;top:178.80px;width:1.00px;height:230.50px;background:#2a2a2a"></div>
<div class="r" style="left:302.00px;top:178.80px;width:1.00px;height:230.50px;background:#2a2a2a"></div>
<div class="r" style="left:328.00px;top:178.80px;width:1.00px;height:230.50px;background:#2a2a2a"></div>
<div class="r" style="left:353.00px;top:178.80px;width:1.00px;height:230.50px;background:#2a2a2a"></div>
<div class="r" style="left:379.00px;top:178.80px;width:1.00px;height:230.50px;background:#2a2a2a"></div>
<div class="r" style="left:404.00px;top:178.80px;width:1.00px;height:230.50px;background:#2a2a2a"></div>
<div class="r" style="left:430.00px;top:178.80px;width:1.00px;height:230.50px;background:#2a2a2a"></div>
<div class="r" style="left:456.00px;top:178.80px;width:1.00px;height:230.50px;background:#2a2a2a"></div>
<div class="r" style="left:481.00px;top:178.80px;width:1.00px;height:230.50px;background:#2a2a2a"></div>
<div class="r" style="left:507.00px;top:178.80px;width:1.00px;height:230.50px;background:#2a2a2a"></div>
<div class="r" style="left:532.00px;top:178.80px;width:1.00px;height:230.50px;background:#2a2a2a"></div>
<div class="r" style="left:558.00px;top:178.80px;width:1.00px;height:230.50px;background:#2a2a2a"></div>
<div class="r" style="left:583.00px;top:178.80px;width:1.00px;height:230.50px;background:#2a2a2a"></div>
<div class="r" style="left:609.00px;top:178.80px;width:1.00px;height:230.50px;background:#2a2a2a"></div>
<div class="r" style="left:226.00px;top:207.00px;width:408.00px;height:1.00px;background:#2a2a2a"></div>
<div class="r" style="left:226.00px;top:236.00px;width:408.00px;height:1.00px;background:#2a2a2a"></div>
<div class="r" style="left:226.00px;top:265.00px;width:408.00px;height:1.00px;background:#2a2a2a"></div>
<div class="r" style="left:226.00px;top:294.00px;width:408.00px;height:1.00px;background:#2a2a2a"></div>
<div class="r" style="left:226.00px;top:323.00px;width:408.00px;height:1.00px;background:#2a2a2a"></div>
<div class="r" style="left:226.00px;top:352.00px;width:408.00px;height:1.00px;background:#2a2a2a"></div>
<div class="r" style="left:226.00px;top:381.00px;width:408.00px;height:1.00px;background:#2a2a2a"></div>
<div class="t" style="left:249.29px;width:30px;text-align:center;top:182.43px;font-size:18.3px;line-height:1.117;color:#000;-webkit-text-stroke:0">!</div>
<div class="t" style="left:274.86px;width:30px;text-align:center;top:182.43px;font-size:18.3px;line-height:1.117;color:#000;-webkit-text-stroke:0">&quot;</div>
<div class="t" style="left:300.43px;width:30px;text-align:center;top:182.43px;font-size:18.3px;line-height:1.117;color:#000;-webkit-text-stroke:0">#</div>
<div class="t" style="left:326.00px;width:30px;text-align:center;top:182.43px;font-size:18.3px;line-height:1.117;color:#000;-webkit-text-stroke:0">$</div>
<div class="t" style="left:351.56px;width:30px;text-align:center;top:182.43px;font-size:18.3px;line-height:1.117;color:#000;-webkit-text-stroke:0">%</div>
<div class="t" style="left:377.14px;width:30px;text-align:center;top:182.43px;font-size:18.3px;line-height:1.117;color:#000;-webkit-text-stroke:0">&amp;</div>
<div class="t" style="left:402.71px;width:30px;text-align:center;top:182.43px;font-size:18.3px;line-height:1.117;color:#000;-webkit-text-stroke:0">'</div>
<div class="t" style="left:428.28px;width:30px;text-align:center;top:182.43px;font-size:18.3px;line-height:1.117;color:#000;-webkit-text-stroke:0">(</div>
<div class="t" style="left:453.85px;width:30px;text-align:center;top:182.43px;font-size:18.3px;line-height:1.117;color:#000;-webkit-text-stroke:0">)</div>
<div class="t" style="left:479.42px;width:30px;text-align:center;top:182.43px;font-size:18.3px;line-height:1.117;color:#000;-webkit-text-stroke:0">*</div>
<div class="t" style="left:504.99px;width:30px;text-align:center;top:182.43px;font-size:18.3px;line-height:1.117;color:#000;-webkit-text-stroke:0">+</div>
<div class="t" style="left:530.55px;width:30px;text-align:center;top:182.43px;font-size:18.3px;line-height:1.117;color:#000;-webkit-text-stroke:0">,</div>
<div class="t" style="left:556.12px;width:30px;text-align:center;top:182.43px;font-size:18.3px;line-height:1.117;color:#000;-webkit-text-stroke:0">-</div>
<div class="t" style="left:581.70px;width:30px;text-align:center;top:182.43px;font-size:18.3px;line-height:1.117;color:#000;-webkit-text-stroke:0">.</div>
<div class="t" style="left:607.26px;width:30px;text-align:center;top:182.43px;font-size:18.3px;line-height:1.117;color:#000;-webkit-text-stroke:0">/</div>
<div class="t" style="left:223.72px;width:30px;text-align:center;top:211.58px;font-size:18.3px;line-height:1.117;color:#000;-webkit-text-stroke:0">0</div>
<div class="t" style="left:249.29px;width:30px;text-align:center;top:211.58px;font-size:18.3px;line-height:1.117;color:#000;-webkit-text-stroke:0">1</div>
<div class="t" style="left:274.86px;width:30px;text-align:center;top:211.58px;font-size:18.3px;line-height:1.117;color:#000;-webkit-text-stroke:0">2</div>
<div class="t" style="left:300.43px;width:30px;text-align:center;top:211.58px;font-size:18.3px;line-height:1.117;color:#000;-webkit-text-stroke:0">3</div>
<div class="t" style="left:326.00px;width:30px;text-align:center;top:211.58px;font-size:18.3px;line-height:1.117;color:#000;-webkit-text-stroke:0">4</div>
<div class="t" style="left:351.56px;width:30px;text-align:center;top:211.58px;font-size:18.3px;line-height:1.117;color:#000;-webkit-text-stroke:0">5</div>
<div class="t" style="left:377.14px;width:30px;text-align:center;top:211.58px;font-size:18.3px;line-height:1.117;color:#000;-webkit-text-stroke:0">6</div>
<div class="t" style="left:402.71px;width:30px;text-align:center;top:211.58px;font-size:18.3px;line-height:1.117;color:#000;-webkit-text-stroke:0">7</div>
<div class="t" style="left:428.28px;width:30px;text-align:center;top:211.58px;font-size:18.3px;line-height:1.117;color:#000;-webkit-text-stroke:0">8</div>
<div class="t" style="left:453.85px;width:30px;text-align:center;top:211.58px;font-size:18.3px;line-height:1.117;color:#000;-webkit-text-stroke:0">9</div>
<div class="t" style="left:479.42px;width:30px;text-align:center;top:211.58px;font-size:18.3px;line-height:1.117;color:#000;-webkit-text-stroke:0">:</div>
<div class="t" style="left:504.99px;width:30px;text-align:center;top:211.58px;font-size:18.3px;line-height:1.117;color:#000;-webkit-text-stroke:0">;</div>
<div class="t" style="left:530.55px;width:30px;text-align:center;top:211.58px;font-size:18.3px;line-height:1.117;color:#000;-webkit-text-stroke:0">&lt;</div>
<div class="t" style="left:556.12px;width:30px;text-align:center;top:211.58px;font-size:18.3px;line-height:1.117;color:#000;-webkit-text-stroke:0">=</div>
<div class="t" style="left:581.70px;width:30px;text-align:center;top:211.58px;font-size:18.3px;line-height:1.117;color:#000;-webkit-text-stroke:0">&gt;</div>
<div class="t" style="left:607.26px;width:30px;text-align:center;top:211.58px;font-size:18.3px;line-height:1.117;color:#000;-webkit-text-stroke:0">?</div>
<div class="t" style="left:223.72px;width:30px;text-align:center;top:240.58px;font-size:18.3px;line-height:1.117;color:#000;-webkit-text-stroke:0">@</div>
<div class="t" style="left:249.29px;width:30px;text-align:center;top:240.58px;font-size:18.3px;line-height:1.117;color:#000;-webkit-text-stroke:0">A</div>
<div class="t" style="left:274.86px;width:30px;text-align:center;top:240.58px;font-size:18.3px;line-height:1.117;color:#000;-webkit-text-stroke:0">B</div>
<div class="t" style="left:300.43px;width:30px;text-align:center;top:240.58px;font-size:18.3px;line-height:1.117;color:#000;-webkit-text-stroke:0">C</div>
<div class="t" style="left:326.00px;width:30px;text-align:center;top:240.58px;font-size:18.3px;line-height:1.117;color:#000;-webkit-text-stroke:0">D</div>
<div class="t" style="left:351.56px;width:30px;text-align:center;top:240.58px;font-size:18.3px;line-height:1.117;color:#000;-webkit-text-stroke:0">E</div>
<div class="t" style="left:377.14px;width:30px;text-align:center;top:240.58px;font-size:18.3px;line-height:1.117;color:#000;-webkit-text-stroke:0">F</div>
<div class="t" style="left:402.71px;width:30px;text-align:center;top:240.58px;font-size:18.3px;line-height:1.117;color:#000;-webkit-text-stroke:0">G</div>
<div class="t" style="left:428.28px;width:30px;text-align:center;top:240.58px;font-size:18.3px;line-height:1.117;color:#000;-webkit-text-stroke:0">H</div>
<div class="t" style="left:453.85px;width:30px;text-align:center;top:240.58px;font-size:18.3px;line-height:1.117;color:#000;-webkit-text-stroke:0">I</div>
<div class="t" style="left:479.42px;width:30px;text-align:center;top:240.58px;font-size:18.3px;line-height:1.117;color:#000;-webkit-text-stroke:0">J</div>
<div class="t" style="left:504.99px;width:30px;text-align:center;top:240.58px;font-size:18.3px;line-height:1.117;color:#000;-webkit-text-stroke:0">K</div>
<div class="t" style="left:530.55px;width:30px;text-align:center;top:240.58px;font-size:18.3px;line-height:1.117;color:#000;-webkit-text-stroke:0">L</div>
<div class="t" style="left:556.12px;width:30px;text-align:center;top:240.58px;font-size:18.3px;line-height:1.117;color:#000;-webkit-text-stroke:0">M</div>
<div class="t" style="left:581.70px;width:30px;text-align:center;top:240.58px;font-size:18.3px;line-height:1.117;color:#000;-webkit-text-stroke:0">N</div>
<div class="t" style="left:607.26px;width:30px;text-align:center;top:240.58px;font-size:18.3px;line-height:1.117;color:#000;-webkit-text-stroke:0">O</div>
<div class="t" style="left:223.72px;width:30px;text-align:center;top:269.63px;font-size:18.3px;line-height:1.117;color:#000;-webkit-text-stroke:0">P</div>
<div class="t" style="left:249.29px;width:30px;text-align:center;top:269.63px;font-size:18.3px;line-height:1.117;color:#000;-webkit-text-stroke:0">Q</div>
<div class="t" style="left:274.86px;width:30px;text-align:center;top:269.63px;font-size:18.3px;line-height:1.117;color:#000;-webkit-text-stroke:0">R</div>
<div class="t" style="left:300.43px;width:30px;text-align:center;top:269.63px;font-size:18.3px;line-height:1.117;color:#000;-webkit-text-stroke:0">S</div>
<div class="t" style="left:326.00px;width:30px;text-align:center;top:269.63px;font-size:18.3px;line-height:1.117;color:#000;-webkit-text-stroke:0">T</div>
<div class="t" style="left:351.56px;width:30px;text-align:center;top:269.63px;font-size:18.3px;line-height:1.117;color:#000;-webkit-text-stroke:0">U</div>
<div class="t" style="left:377.14px;width:30px;text-align:center;top:269.63px;font-size:18.3px;line-height:1.117;color:#000;-webkit-text-stroke:0">V</div>
<div class="t" style="left:402.71px;width:30px;text-align:center;top:269.63px;font-size:18.3px;line-height:1.117;color:#000;-webkit-text-stroke:0">W</div>
<div class="t" style="left:428.28px;width:30px;text-align:center;top:269.63px;font-size:18.3px;line-height:1.117;color:#000;-webkit-text-stroke:0">X</div>
<div class="t" style="left:453.85px;width:30px;text-align:center;top:269.63px;font-size:18.3px;line-height:1.117;color:#000;-webkit-text-stroke:0">Y</div>
<div class="t" style="left:479.42px;width:30px;text-align:center;top:269.63px;font-size:18.3px;line-height:1.117;color:#000;-webkit-text-stroke:0">Z</div>
<div class="t" style="left:504.99px;width:30px;text-align:center;top:269.63px;font-size:18.3px;line-height:1.117;color:#000;-webkit-text-stroke:0">[</div>
<div class="t" style="left:530.55px;width:30px;text-align:center;top:269.63px;font-size:18.3px;line-height:1.117;color:#000;-webkit-text-stroke:0">\</div>
<div class="t" style="left:556.12px;width:30px;text-align:center;top:269.63px;font-size:18.3px;line-height:1.117;color:#000;-webkit-text-stroke:0">]</div>
<div class="t" style="left:581.70px;width:30px;text-align:center;top:269.63px;font-size:18.3px;line-height:1.117;color:#000;-webkit-text-stroke:0">^</div>
<div class="t" style="left:607.26px;width:30px;text-align:center;top:269.63px;font-size:18.3px;line-height:1.117;color:#000;-webkit-text-stroke:0">_</div>
<div class="t" style="left:223.72px;width:30px;text-align:center;top:298.63px;font-size:18.3px;line-height:1.117;color:#000;-webkit-text-stroke:0">`</div>
<div class="t" style="left:249.29px;width:30px;text-align:center;top:298.63px;font-size:18.3px;line-height:1.117;color:#000;-webkit-text-stroke:0">a</div>
<div class="t" style="left:274.86px;width:30px;text-align:center;top:298.63px;font-size:18.3px;line-height:1.117;color:#000;-webkit-text-stroke:0">b</div>
<div class="t" style="left:300.43px;width:30px;text-align:center;top:298.63px;font-size:18.3px;line-height:1.117;color:#000;-webkit-text-stroke:0">c</div>
<div class="t" style="left:326.00px;width:30px;text-align:center;top:298.63px;font-size:18.3px;line-height:1.117;color:#000;-webkit-text-stroke:0">d</div>
<div class="t" style="left:351.56px;width:30px;text-align:center;top:298.63px;font-size:18.3px;line-height:1.117;color:#000;-webkit-text-stroke:0">e</div>
<div class="t" style="left:377.14px;width:30px;text-align:center;top:298.63px;font-size:18.3px;line-height:1.117;color:#000;-webkit-text-stroke:0">f</div>
<div class="t" style="left:402.71px;width:30px;text-align:center;top:298.63px;font-size:18.3px;line-height:1.117;color:#000;-webkit-text-stroke:0">g</div>
<div class="t" style="left:428.28px;width:30px;text-align:center;top:298.63px;font-size:18.3px;line-height:1.117;color:#000;-webkit-text-stroke:0">h</div>
<div class="t" style="left:453.85px;width:30px;text-align:center;top:298.63px;font-size:18.3px;line-height:1.117;color:#000;-webkit-text-stroke:0">i</div>
<div class="t" style="left:479.42px;width:30px;text-align:center;top:298.63px;font-size:18.3px;line-height:1.117;color:#000;-webkit-text-stroke:0">j</div>
<div class="t" style="left:504.99px;width:30px;text-align:center;top:298.63px;font-size:18.3px;line-height:1.117;color:#000;-webkit-text-stroke:0">k</div>
<div class="t" style="left:530.55px;width:30px;text-align:center;top:298.63px;font-size:18.3px;line-height:1.117;color:#000;-webkit-text-stroke:0">l</div>
<div class="t" style="left:556.12px;width:30px;text-align:center;top:298.63px;font-size:18.3px;line-height:1.117;color:#000;-webkit-text-stroke:0">m</div>
<div class="t" style="left:581.70px;width:30px;text-align:center;top:298.63px;font-size:18.3px;line-height:1.117;color:#000;-webkit-text-stroke:0">n</div>
<div class="t" style="left:607.26px;width:30px;text-align:center;top:298.63px;font-size:18.3px;line-height:1.117;color:#000;-webkit-text-stroke:0">o</div>
<div class="t" style="left:223.72px;width:30px;text-align:center;top:327.68px;font-size:18.3px;line-height:1.117;color:#000;-webkit-text-stroke:0">p</div>
<div class="t" style="left:249.29px;width:30px;text-align:center;top:327.68px;font-size:18.3px;line-height:1.117;color:#000;-webkit-text-stroke:0">q</div>
<div class="t" style="left:274.86px;width:30px;text-align:center;top:327.68px;font-size:18.3px;line-height:1.117;color:#000;-webkit-text-stroke:0">r</div>
<div class="t" style="left:300.43px;width:30px;text-align:center;top:327.68px;font-size:18.3px;line-height:1.117;color:#000;-webkit-text-stroke:0">s</div>
<div class="t" style="left:326.00px;width:30px;text-align:center;top:327.68px;font-size:18.3px;line-height:1.117;color:#000;-webkit-text-stroke:0">t</div>
<div class="t" style="left:351.56px;width:30px;text-align:center;top:327.68px;font-size:18.3px;line-height:1.117;color:#000;-webkit-text-stroke:0">u</div>
<div class="t" style="left:377.14px;width:30px;text-align:center;top:327.68px;font-size:18.3px;line-height:1.117;color:#000;-webkit-text-stroke:0">v</div>
<div class="t" style="left:402.71px;width:30px;text-align:center;top:327.68px;font-size:18.3px;line-height:1.117;color:#000;-webkit-text-stroke:0">w</div>
<div class="t" style="left:428.28px;width:30px;text-align:center;top:327.68px;font-size:18.3px;line-height:1.117;color:#000;-webkit-text-stroke:0">x</div>
<div class="t" style="left:453.85px;width:30px;text-align:center;top:327.68px;font-size:18.3px;line-height:1.117;color:#000;-webkit-text-stroke:0">y</div>
<div class="t" style="left:479.42px;width:30px;text-align:center;top:327.68px;font-size:18.3px;line-height:1.117;color:#000;-webkit-text-stroke:0">z</div>
<div class="t" style="left:504.99px;width:30px;text-align:center;top:327.68px;font-size:18.3px;line-height:1.117;color:#000;-webkit-text-stroke:0">{</div>
<div class="t" style="left:530.55px;width:30px;text-align:center;top:327.68px;font-size:18.3px;line-height:1.117;color:#000;-webkit-text-stroke:0">|</div>
<div class="t" style="left:556.12px;width:30px;text-align:center;top:327.68px;font-size:18.3px;line-height:1.117;color:#000;-webkit-text-stroke:0">}</div>
<div class="t" style="left:581.70px;width:30px;text-align:center;top:327.68px;font-size:18.3px;line-height:1.117;color:#000;-webkit-text-stroke:0">~</div>
<div class="t" style="left:223.72px;width:30px;text-align:center;top:356.78px;font-size:18.3px;line-height:1.117;color:#000;-webkit-text-stroke:0">&#161;</div>
<div class="t" style="left:249.29px;width:30px;text-align:center;top:356.78px;font-size:18.3px;line-height:1.117;color:#000;-webkit-text-stroke:0">&#162;</div>
<div class="t" style="left:274.86px;width:30px;text-align:center;top:356.78px;font-size:18.3px;line-height:1.117;color:#000;-webkit-text-stroke:0">&#163;</div>
<div class="t" style="left:300.43px;width:30px;text-align:center;top:356.78px;font-size:18.3px;line-height:1.117;color:#000;-webkit-text-stroke:0">&#164;</div>
<div class="t" style="left:326.00px;width:30px;text-align:center;top:356.78px;font-size:18.3px;line-height:1.117;color:#000;-webkit-text-stroke:0">&#165;</div>
<div class="t" style="left:351.56px;width:30px;text-align:center;top:356.78px;font-size:18.3px;line-height:1.117;color:#000;-webkit-text-stroke:0">&#166;</div>
<div class="t" style="left:377.14px;width:30px;text-align:center;top:356.78px;font-size:18.3px;line-height:1.117;color:#000;-webkit-text-stroke:0">&#167;</div>
<div class="t" style="left:402.71px;width:30px;text-align:center;top:356.78px;font-size:18.3px;line-height:1.117;color:#000;-webkit-text-stroke:0">&#168;</div>
<div class="t" style="left:428.28px;width:30px;text-align:center;top:356.78px;font-size:18.3px;line-height:1.117;color:#000;-webkit-text-stroke:0">&#169;</div>
<div class="t" style="left:453.85px;width:30px;text-align:center;top:356.78px;font-size:18.3px;line-height:1.117;color:#000;-webkit-text-stroke:0">&#170;</div>
<div class="t" style="left:479.42px;width:30px;text-align:center;top:356.78px;font-size:18.3px;line-height:1.117;color:#000;-webkit-text-stroke:0">&#171;</div>
<div class="t" style="left:504.99px;width:30px;text-align:center;top:356.78px;font-size:18.3px;line-height:1.117;color:#000;-webkit-text-stroke:0">&#172;</div>
<div class="t" style="left:556.12px;width:30px;text-align:center;top:356.78px;font-size:18.3px;line-height:1.117;color:#000;-webkit-text-stroke:0">&#174;</div>
<div class="t" style="left:581.70px;width:30px;text-align:center;top:356.78px;font-size:18.3px;line-height:1.117;color:#000;-webkit-text-stroke:0">&#175;</div>
<div class="t" style="left:607.26px;width:30px;text-align:center;top:356.78px;font-size:18.3px;line-height:1.117;color:#000;-webkit-text-stroke:0">&#176;</div>
<div class="t" style="left:223.72px;width:30px;text-align:center;top:385.28px;font-size:18.3px;line-height:1.117;color:#000;-webkit-text-stroke:0">&#177;</div>
<div class="t" style="left:249.29px;width:30px;text-align:center;top:385.28px;font-size:18.3px;line-height:1.117;color:#000;-webkit-text-stroke:0">&#178;</div>
<div class="t" style="left:274.86px;width:30px;text-align:center;top:385.28px;font-size:18.3px;line-height:1.117;color:#000;-webkit-text-stroke:0">&#179;</div>
<div class="t" style="left:300.43px;width:30px;text-align:center;top:385.28px;font-size:18.3px;line-height:1.117;color:#000;-webkit-text-stroke:0">&#180;</div>
<div class="t" style="left:326.00px;width:30px;text-align:center;top:385.28px;font-size:18.3px;line-height:1.117;color:#000;-webkit-text-stroke:0">&#181;</div>
<div class="t" style="left:351.56px;width:30px;text-align:center;top:385.28px;font-size:18.3px;line-height:1.117;color:#000;-webkit-text-stroke:0">&#182;</div>
<div class="t" style="left:377.14px;width:30px;text-align:center;top:385.28px;font-size:18.3px;line-height:1.117;color:#000;-webkit-text-stroke:0">&#183;</div>
<div class="t" style="left:402.71px;width:30px;text-align:center;top:385.28px;font-size:18.3px;line-height:1.117;color:#000;-webkit-text-stroke:0">&#184;</div>
<div class="t" style="left:428.28px;width:30px;text-align:center;top:385.28px;font-size:18.3px;line-height:1.117;color:#000;-webkit-text-stroke:0">&#185;</div>
<div class="t" style="left:453.85px;width:30px;text-align:center;top:385.28px;font-size:18.3px;line-height:1.117;color:#000;-webkit-text-stroke:0">&#186;</div>
<div class="t" style="left:479.42px;width:30px;text-align:center;top:385.28px;font-size:18.3px;line-height:1.117;color:#000;-webkit-text-stroke:0">&#187;</div>
<div class="t" style="left:504.99px;width:30px;text-align:center;top:385.28px;font-size:18.3px;line-height:1.117;color:#000;-webkit-text-stroke:0">&#188;</div>
<div class="t" style="left:530.55px;width:30px;text-align:center;top:385.28px;font-size:18.3px;line-height:1.117;color:#000;-webkit-text-stroke:0">&#189;</div>
<div class="t" style="left:556.12px;width:30px;text-align:center;top:385.28px;font-size:18.3px;line-height:1.117;color:#000;-webkit-text-stroke:0">&#190;</div>
<div class="t" style="left:581.70px;width:30px;text-align:center;top:385.28px;font-size:18.3px;line-height:1.117;color:#000;-webkit-text-stroke:0">&#191;</div>
<div class="t" style="left:607.26px;width:30px;text-align:center;top:385.28px;font-size:18.3px;line-height:1.117;color:#000;-webkit-text-stroke:0">&#192;</div>
<div class="r" style="left:659.00px;top:178.00px;width:130.00px;height:90.60px;background:#fff;border:1px solid #3c3c3c"></div>
<div class="t" style="left:685.60px;top:275.81px;font-size:10.5px;color:#000;letter-spacing:-0.338px;"><u>M</u>issing character</div>
<div class="t" style="left:658.40px;top:338.91px;font-size:10.5px;color:#000;letter-spacing:-0.382px;">He<u>x</u>adecimal:</div>
<div class="t" style="left:726.50px;top:338.91px;font-size:10.5px;color:#000;letter-spacing:-1.000px;"><u>U</u>+</div>
<div class="r" style="left:741.40px;top:331.30px;width:44.60px;height:24.00px;background:#fff;border:1px solid #a8a8a8"></div>
<div class="t" style="left:744.60px;top:338.91px;font-size:10.5px;color:#000;">1</div>
<div class="t" style="left:659.40px;top:365.91px;font-size:10.5px;color:#000;letter-spacing:-0.486px;"><u>D</u>ecimal:</div>
<div class="r" style="left:726.00px;top:358.50px;width:62.50px;height:23.80px;background:#fff;border:1px solid #a8a8a8"></div>
<div class="t" style="left:728.80px;top:365.91px;font-size:10.5px;color:#000;">1</div>
<div class="r" style="left:665.00px;top:386.00px;width:123.00px;height:22.60px;background:#cccccc;border:1px solid #bfbfbf"></div>
<div class="t" style="left:688.00px;top:393.31px;font-size:10.5px;color:#838383;letter-spacing:-0.406px;"><u>A</u>dd to Favourites</div>
<div class="t" style="left:225.00px;top:421.71px;font-size:10.5px;color:#000;letter-spacing:-0.624px;"><u>R</u>ecent Characters:</div>
<div class="t" style="left:223.90px;top:477.71px;font-size:10.5px;color:#000;letter-spacing:-0.465px;">Fa<u>v</u>ourite Characters:</div>
<div class="r" style="left:224.90px;top:494.20px;width:19.60px;height:24.30px;background:#fff;border:1px solid #2a2a2a"></div>
<div class="t" style="left:223.60px;width:19.6px;text-align:center;top:501.20px;font-size:12px;font-family:'Liberation Serif',serif;color:#222">&#8364;</div>
<div class="r" style="left:246.33px;top:494.20px;width:19.60px;height:24.30px;background:#fff;border:1px solid #2a2a2a"></div>
<div class="t" style="left:245.03px;width:19.6px;text-align:center;top:501.20px;font-size:12px;font-family:'Liberation Serif',serif;color:#222">&#165;</div>
<div class="r" style="left:267.76px;top:494.20px;width:19.60px;height:24.30px;background:#fff;border:1px solid #2a2a2a"></div>
<div class="t" style="left:266.46px;width:19.6px;text-align:center;top:501.20px;font-size:12px;font-family:'Liberation Serif',serif;color:#222">&#163;</div>
<div class="r" style="left:289.19px;top:494.20px;width:19.60px;height:24.30px;background:#fff;border:1px solid #2a2a2a"></div>
<div class="t" style="left:287.89px;width:19.6px;text-align:center;top:501.20px;font-size:12px;font-family:'Liberation Serif',serif;color:#222">&#169;</div>
<div class="r" style="left:310.62px;top:494.20px;width:19.60px;height:24.30px;background:#fff;border:1px solid #2a2a2a"></div>
<div class="t" style="left:309.32px;width:19.6px;text-align:center;top:501.20px;font-size:12px;font-family:'Liberation Serif',serif;color:#222">&#931;</div>
<div class="r" style="left:332.05px;top:494.20px;width:19.60px;height:24.30px;background:#fff;border:1px solid #2a2a2a"></div>
<div class="t" style="left:330.75px;width:19.6px;text-align:center;top:501.20px;font-size:12px;font-family:'Liberation Serif',serif;color:#222">&#937;</div>
<div class="r" style="left:353.48px;top:494.20px;width:19.60px;height:24.30px;background:#fff;border:1px solid #2a2a2a"></div>
<div class="t" style="left:352.18px;width:19.6px;text-align:center;top:501.20px;font-size:12px;font-family:'Liberation Serif',serif;color:#222">&#8804;</div>
<div class="r" style="left:374.91px;top:494.20px;width:19.60px;height:24.30px;background:#fff;border:1px solid #2a2a2a"></div>
<div class="t" style="left:373.61px;width:19.6px;text-align:center;top:501.20px;font-size:12px;font-family:'Liberation Serif',serif;color:#222">&#8805;</div>
<div class="r" style="left:396.34px;top:494.20px;width:19.60px;height:24.30px;background:#fff;border:1px solid #2a2a2a"></div>
<div class="t" style="left:395.04px;width:19.6px;text-align:center;top:501.20px;font-size:12px;font-family:'Liberation Serif',serif;color:#222">&#8734;</div>
<div class="r" style="left:417.77px;top:494.20px;width:19.60px;height:24.30px;background:#fff;border:1px solid #2a2a2a"></div>
<div class="t" style="left:416.47px;width:19.6px;text-align:center;top:501.20px;font-size:12px;font-family:'Liberation Serif',serif;color:#222">&#960;</div>
<div class="r" style="left:439.20px;top:494.20px;width:19.60px;height:24.30px;background:#fff;border:1px solid #2a2a2a"></div>
<div class="t" style="left:437.90px;width:19.6px;text-align:center;top:501.20px;font-size:12px;font-family:'Liberation Serif',serif;color:#222">&#8224;</div>
<div class="r" style="left:460.63px;top:494.20px;width:19.60px;height:24.30px;background:#fff;border:1px solid #2a2a2a"></div>
<div class="t" style="left:459.33px;width:19.6px;text-align:center;top:501.20px;font-size:12px;font-family:'Liberation Serif',serif;color:#222">&#8225;</div>
<div class="r" style="left:230.00px;top:533.80px;width:68.00px;height:22.70px;background:#e1e1e1;border:1px solid #adadad"></div>
<div class="t" style="left:253.70px;top:540.61px;font-size:10.5px;color:#000;letter-spacing:-0.100px;"><u>H</u>elp</div>
<div class="r" style="left:640.00px;top:533.80px;width:68.70px;height:22.70px;background:#cccccc;border:1px solid #bfbfbf"></div>
<div class="t" style="left:662.30px;top:540.61px;font-size:10.5px;color:#838383;letter-spacing:-0.380px;"><u>I</u>nsert</div>
<div class="r" style="left:715.00px;top:533.80px;width:68.60px;height:22.70px;background:#e1e1e1;border:1px solid #adadad"></div>
<div class="t" style="left:734.70px;top:540.61px;font-size:10.5px;color:#000;letter-spacing:-0.540px;"><u>C</u>ancel</div>
</body></html>
